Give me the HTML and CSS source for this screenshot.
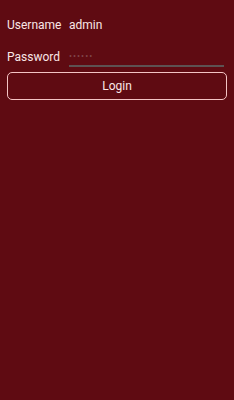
FILE: index.html
```html
<!DOCTYPE html>
<html lang="en">
<head>
	<meta charset="UTF-8">
	<title>Login</title>
	<link rel="stylesheet" href="styles.css">
</head>
<body>
	<div class="form">
		<div class="row">
			<span class="label">Username</span>
			<span class="value">admin</span>
		</div>
		<div class="row row_pass">
			<span class="label">Password</span>
			<input class="field" type="password" placeholder="••••••">
		</div>
		<button class="login">Login</button>
	</div>
</body>
</html>
```
FILE: styles.css
```css
html, body {
	margin: 0;
	height: 100%;
	background: #5f0b12;
}
body {
	font-family: Roboto, "Liberation Sans", sans-serif;
	color: #fae6e6;
}
.form {
	display: flex;
	flex-direction: column;
	padding: 8px 7px 0 7px;
}
.row {
	display: flex;
	align-items: center;
	height: 33px;
	font-size: 12px;
}
.row_pass {
	height: 31px;
}
.label {
	width: 62px;
	flex-shrink: 0;
}
.field {
	flex: 1;
	min-width: 0;
	margin-top: 0;
	margin-right: 3px;
	height: 18px;
	padding: 0;
	border: none;
	border-bottom: 2px solid #5d5252;
	background: transparent;
	color: #fae6e6;
	font-size: 9px;
	letter-spacing: 1px;
	font-family: inherit;
	outline: none;
}
.field::placeholder {
	color: #80464b;
}
.login {
	margin-top: 0;
	height: 28px;
	border: 1.5px solid #f4c4c4;
	border-radius: 5px;
	background: transparent;
	color: #fae6e6;
	font-family: inherit;
	font-size: 12px;
}
```
